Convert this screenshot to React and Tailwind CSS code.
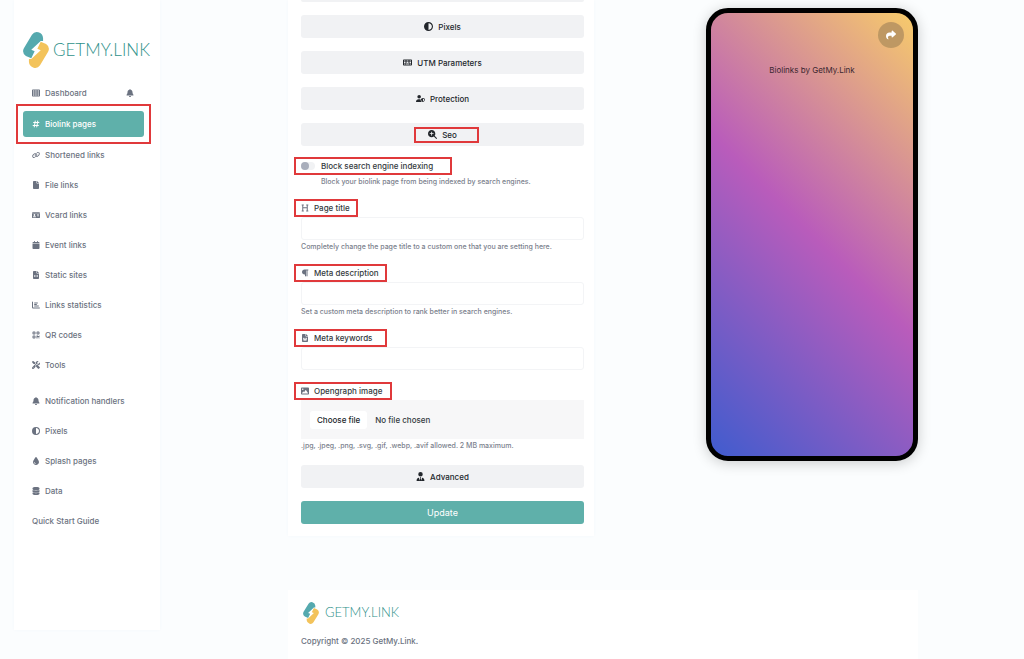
import React from "react";
import {
  FaBell,
  FaCalendar,
  FaChartBar,
  FaCircleHalfStroke,
  FaDatabase,
  FaDroplet,
  FaFile,
  FaFileCode,
  FaFileWord,
  FaHashtag,
  FaHeading,
  FaIdCard,
  FaImage,
  FaKeyboard,
  FaLink,
  FaMagnifyingGlassPlus,
  FaParagraph,
  FaQrcode,
  FaScrewdriverWrench,
  FaShare,
  FaTableCells,
  FaUserShield,
  FaUserTie,
} from "react-icons/fa6";

const mainLinks = [
  { label: "Dashboard", icon: FaTableCells, bell: true },
  { label: "Biolink pages", icon: FaHashtag, active: true },
  { label: "Shortened links", icon: FaLink },
  { label: "File links", icon: FaFile },
  { label: "Vcard links", icon: FaIdCard },
  { label: "Event links", icon: FaCalendar },
  { label: "Static sites", icon: FaFileCode },
  { label: "Links statistics", icon: FaChartBar },
  { label: "QR codes", icon: FaQrcode },
  { label: "Tools", icon: FaScrewdriverWrench },
];

const moreLinks = [
  { label: "Notification handlers", icon: FaBell },
  { label: "Pixels", icon: FaCircleHalfStroke },
  { label: "Splash pages", icon: FaDroplet },
  { label: "Data", icon: FaDatabase },
  { label: "Quick Start Guide" },
];

function LogoMark({ className }) {
  // one half of the emblem, drawn twice; the gap between them is the bolt
  const half =
    "M26 8 Q33 -2 45 1 Q58 5 59 18 L59 27 L52 27 L24 53 L34 57 L24 78 L8 71 Q-5 62 2 48 Z";
  return (
    <svg viewBox="0 0 76 107" className={className} aria-hidden="true">
      <path d={half} fill="#55a9ae" />
      <path d={half} fill="#f3c35b" transform="rotate(180 38 53.5)" />
    </svg>
  );
}

function Highlight({ className }) {
  return <span className={`pointer-events-none absolute border-2 border-[#e0393b] ${className}`} />;
}

function NavItem({ item }) {
  const Icon = item.icon;
  return (
    <li className={item.active ? "relative my-px" : ""}>
      <a
        href="#"
        className={`flex h-[26px] items-center gap-[5px] rounded-[3px] px-[9px] ${
          item.active ? "bg-[#5fb0aa] text-white" : "text-[#6b7280]"
        }`}
      >
        {Icon && <Icon className="size-2 shrink-0" />}
        <span className="whitespace-nowrap">{item.label}</span>
        {item.bell && <FaBell className="mr-px ml-auto size-2" />}
      </a>
      {item.active && <Highlight className="-inset-[7px]" />}
    </li>
  );
}

function Sidebar() {
  return (
    <aside className="ml-3.5 w-[146px] shrink-0 self-start bg-white pt-8 pr-4 pb-24 pl-[9px] text-[8px] font-medium shadow-[0_0_3px_#f4f8fb]">
      <a href="#" className="flex h-9 items-center gap-1">
        <LogoMark className="h-9 w-[26px] shrink-0" />
        <span className="font-['Lato',sans-serif] text-[17px] font-light text-[#2f918a]">GETMY.LINK</span>
      </a>
      <ul className="mt-3 flex flex-col gap-1">
        {mainLinks.map((item) => (
          <NavItem key={item.label} item={item} />
        ))}
      </ul>
      <ul className="mt-2.5 flex flex-col gap-1">
        {moreLinks.map((item) => (
          <NavItem key={item.label} item={item} />
        ))}
      </ul>
    </aside>
  );
}

function SectionButton({ icon: Icon, children, marked }) {
  return (
    <button
      type="button"
      className="mt-[13px] flex h-[23px] w-full items-center justify-center rounded-[3px] bg-[#f1f2f4] text-[8px] font-medium text-[#22262b]"
    >
      <span className="relative flex items-center gap-[5px]">
        <Icon className="size-[9px]" />
        {children}
        {marked && <Highlight className="-inset-y-0.5 -right-[22px] -left-[14px]" />}
      </span>
    </button>
  );
}

function FieldLabel({ htmlFor, icon: Icon, width, children }) {
  return (
    <label
      htmlFor={htmlFor}
      className={`-ml-[7px] flex h-[18px] items-center gap-[5px] border-2 border-[#e0393b] pl-[5px] text-[8px] font-medium whitespace-nowrap text-[#343a40] ${width}`}
    >
      <Icon className="size-2 text-[#6b7280]" />
      {children}
    </label>
  );
}

function Help({ children, className = "" }) {
  return <p className={`mt-px text-[7px] leading-3 font-medium text-[#7b818d] ${className}`}>{children}</p>;
}

function TextField({ id, label, icon, width, help }) {
  return (
    <div className="mt-[11px]">
      <FieldLabel htmlFor={id} icon={icon} width={width}>
        {label}
      </FieldLabel>
      <input id={id} type="text" className="block h-[23px] w-full rounded-[3px] border border-[#f3f4f6] bg-white px-2 text-[8px]" />
      {help && <Help>{help}</Help>}
    </div>
  );
}

function SettingsForm() {
  return (
    <form className="bg-white pr-2.5 pb-3 pl-[13px] shadow-[0_0_3px_#f4f8fb]" onSubmit={(e) => e.preventDefault()}>
      <div className="h-0.5 rounded-b-[3px] bg-[#f1f2f4]" />
      <SectionButton icon={FaCircleHalfStroke}>Pixels</SectionButton>
      <SectionButton icon={FaKeyboard}>UTM Parameters</SectionButton>
      <SectionButton icon={FaUserShield}>Protection</SectionButton>
      <SectionButton icon={FaMagnifyingGlassPlus} marked>
        Seo
      </SectionButton>

      <div className="mt-[11px]">
        <label
          htmlFor="block"
          className="-ml-[7px] flex h-[18px] w-[158px] items-center gap-1.5 border-2 border-[#e0393b] pl-[5px] text-[8px] font-medium whitespace-nowrap text-[#343a40]"
        >
          <input
            id="block"
            type="checkbox"
            className="flex h-2 w-3.5 appearance-none items-center rounded-full bg-[#f1f2f4] before:size-2 before:rounded-full before:bg-[#a9aebb] checked:justify-end"
          />
          Block search engine indexing
        </label>
        <Help className="pl-5">Block your biolink page from being indexed by search engines.</Help>
      </div>

      <TextField
        id="title"
        label="Page title"
        icon={FaHeading}
        width="w-16"
        help="Completely change the page title to a custom one that you are setting here."
      />
      <TextField
        id="description"
        label="Meta description"
        icon={FaParagraph}
        width="w-[93px]"
        help="Set a custom meta description to rank better in search engines."
      />
      <TextField id="keywords" label="Meta keywords" icon={FaFileWord} width="w-[93px]" />

      <div className="mt-3">
        <FieldLabel htmlFor="image" icon={FaImage} width="w-[98px]">
          Opengraph image
        </FieldLabel>
        <label htmlFor="image" className="relative flex h-[39px] items-center gap-2 bg-[#f7f7f8] px-[9px] text-[8px] font-medium text-[#343a40]">
          <input id="image" type="file" className="sr-only" />
          <span className="rounded-[3px] bg-white px-[7px] leading-[18px] text-[#22262b]">Choose file</span>
          <span>No file chosen</span>
        </label>
        <Help>.jpg, .jpeg, .png, .svg, .gif, .webp, .avif allowed. 2 MB maximum.</Help>
      </div>

      <SectionButton icon={FaUserTie}>Advanced</SectionButton>
      <button type="submit" className="mt-[13px] h-[23px] w-full rounded-[3px] bg-[#5fb0aa] text-[9px] text-white">
        Update
      </button>
    </form>
  );
}

function PhonePreview() {
  return (
    <div className="mt-2 flex h-[453px] w-[212px] flex-col self-start justify-self-end rounded-[22px] border-[5px] border-black bg-[linear-gradient(45deg,#405cce_0%,#b95cbb_50%,#f7cb6b_100%)] px-[9px] pt-[9px] shadow-[0_2px_14px_rgba(0,0,0,0.2)]">
      <button
        type="button"
        aria-label="Share"
        className="flex size-[26px] items-center justify-center self-end rounded-full bg-[#be9863] text-white"
      >
        <FaShare className="size-2.5" />
      </button>
      <p className="mt-4 text-center text-[8px] leading-3 text-[#3a2630]">Biolinks by GetMy.Link</p>
    </div>
  );
}

export default function App() {
  return (
    <div className="flex min-h-screen bg-[#fbfdfe] font-['Inter',sans-serif]">
      <Sidebar />
      <div className="flex min-w-0 flex-1 flex-col pr-[106px] pl-32">
        <main className="grid grid-cols-2 gap-[18px]">
          <SettingsForm />
          <PhonePreview />
        </main>
        <footer className="mt-[54px] flex-1 bg-white px-[13px] pt-3 text-[8px] font-medium text-[#6b7280]">
          <a href="#" className="flex h-[22px] items-center gap-1">
            <LogoMark className="h-[22px] w-5 shrink-0" />
            <span className="font-['Lato',sans-serif] text-[13px] font-light text-[#2f918a]">GETMY.LINK</span>
          </a>
          <p className="mt-[11px] leading-3">Copyright © 2025 GetMy.Link.</p>
        </footer>
      </div>
    </div>
  );
}
